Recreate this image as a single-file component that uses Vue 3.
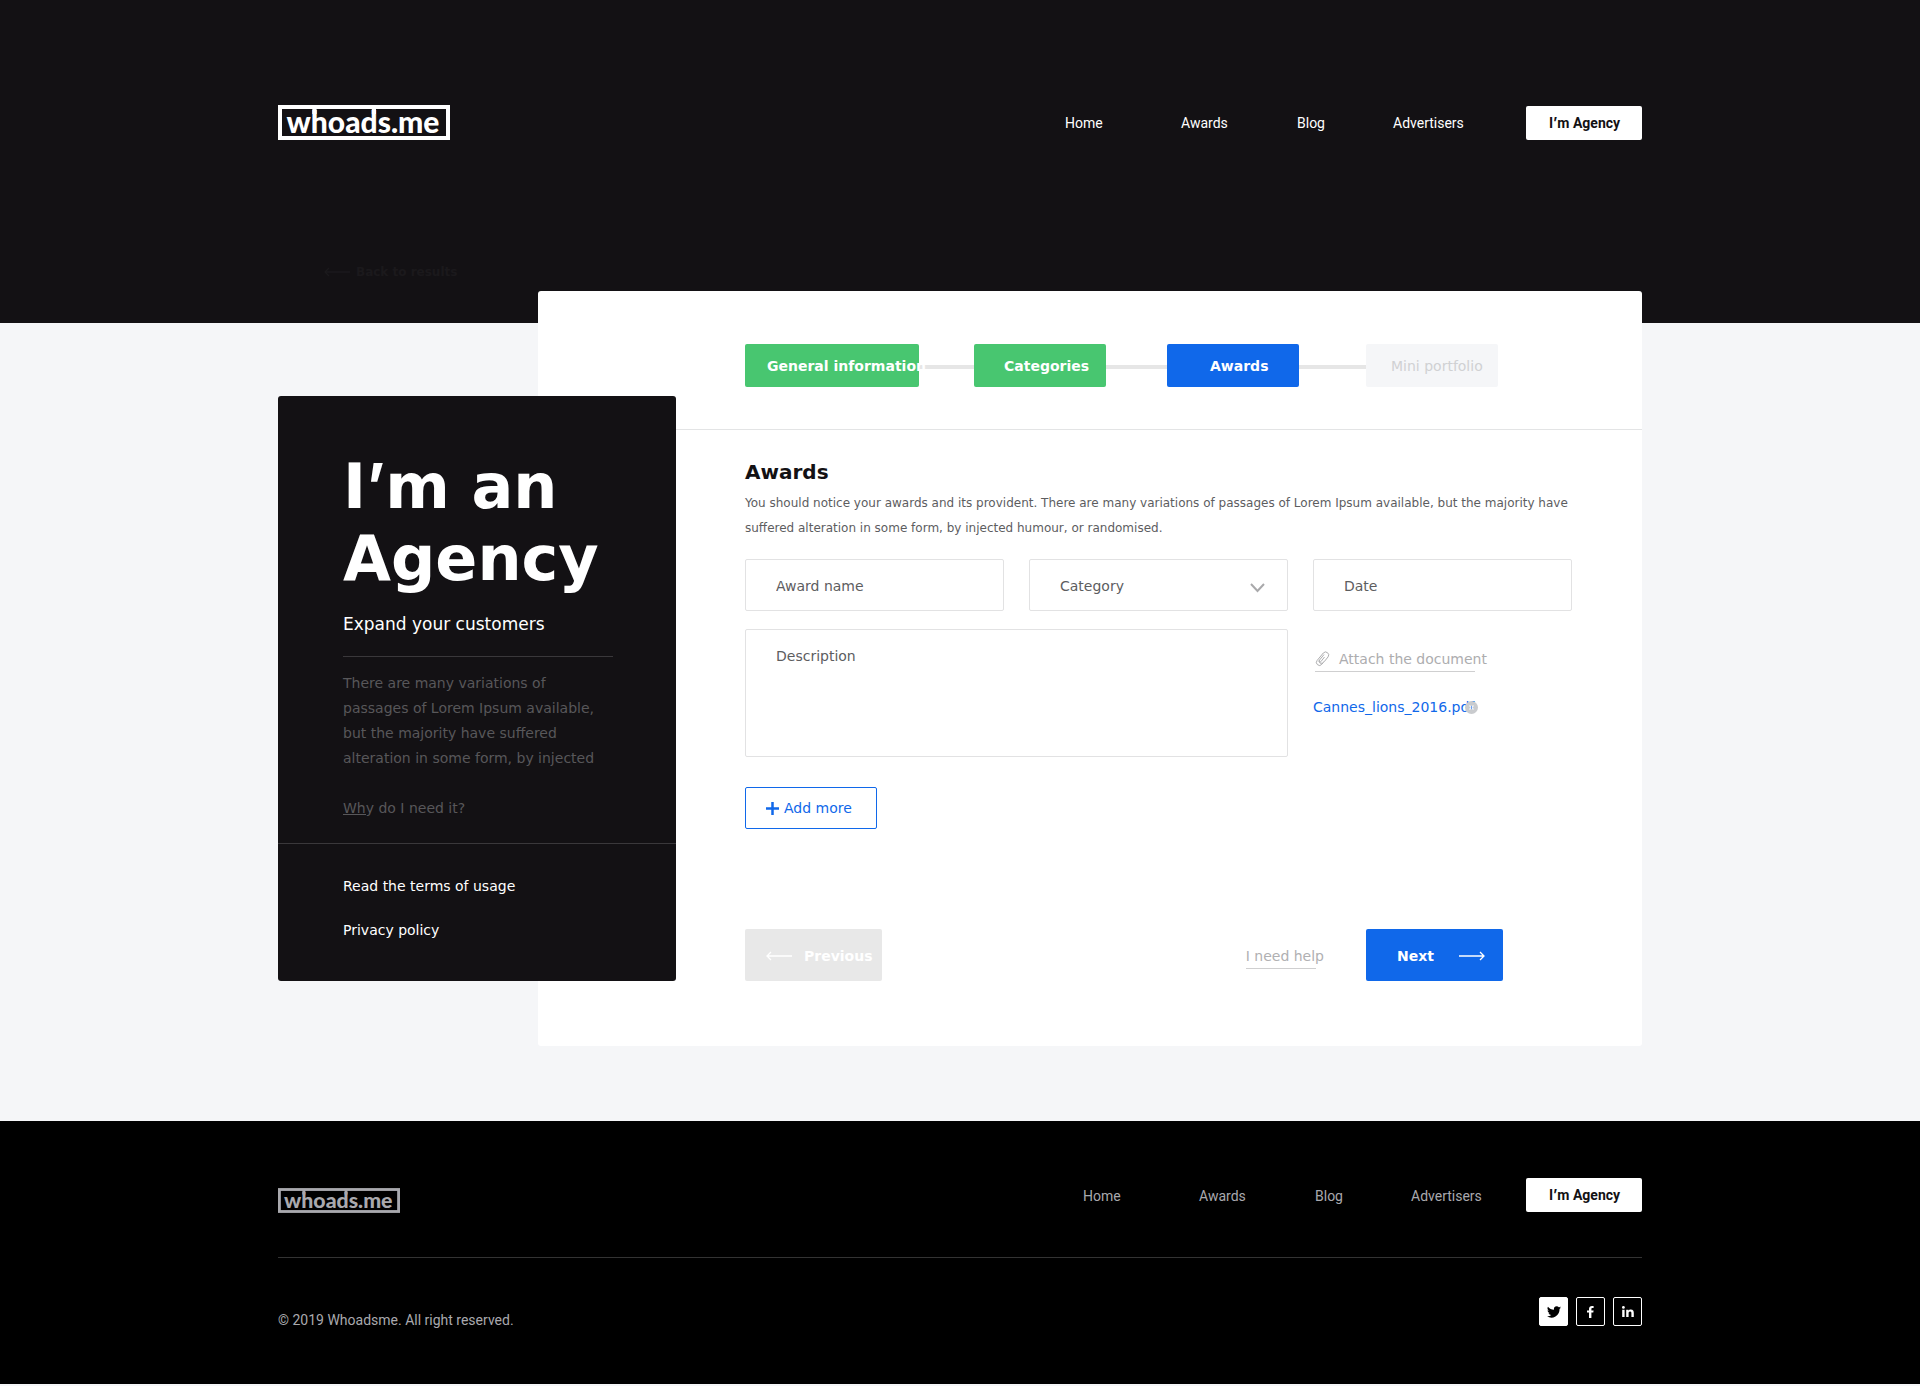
<script setup>
import { ref } from 'vue'

const links = ['Home', 'Awards', 'Blog', 'Advertisers']

const steps = [
  { label: 'General information', state: 'done wide', gap: 55 },
  { label: 'Categories', state: 'done', gap: 61 },
  { label: 'Awards', state: 'current', gap: 67 },
  { label: 'Mini portfolio', state: 'todo', gap: 0 },
]

const category = ref('')
const files = ref(['Cannes_lions_2016.pdf'])
const removeFile = (name) => {
  files.value = files.value.filter((f) => f !== name)
}
</script>

<template>
  <div class="page">
    <header class="top">
      <div class="container">
        <div class="bar">
          <a href="#" class="logo" aria-label="whoads.me">
            <svg viewBox="0 0 172 35" width="172" height="35">
              <rect x="2" y="2" width="168" height="31" fill="none" stroke="currentColor" stroke-width="4" />
              <path d="M34.300 3h4.300v6h-4.300zM93.800 3h4.200v6h-4.200z" fill="currentColor" />
              <text x="85" y="28" text-anchor="middle">whoads.me</text>
            </svg>
          </a>
          <nav class="nav">
            <a v-for="l in links" :key="l" href="#">{{ l }}</a>
            <button type="button" class="agency">I<span class="apos">’</span>m Agency</button>
          </nav>
        </div>
        <a href="#" class="back">
          <svg width="26" height="10" viewBox="0 0 26 10"><path d="M1 5h25M5 1L1 5l4 4" /></svg>
          Back to results
        </a>
      </div>
    </header>

    <main class="container stage">
      <section class="panel">
        <ol class="steps">
          <li v-for="s in steps" :key="s.label">
            <button type="button" class="step" :class="s.state">{{ s.label }}</button>
            <span v-if="s.gap" class="link-line" :style="{ width: s.gap + 'px' }"></span>
          </li>
        </ol>

        <form class="form" @submit.prevent>
          <h2>Awards</h2>
          <p class="intro">
            You should notice your awards and its provident. There are many variations of passages of
            Lorem Ipsum available, but the majority have suffered alteration in some form, by injected
            humour, or randomised.
          </p>

          <div class="fields">
            <div>
              <label class="sr" for="award-name">Award name</label>
              <input id="award-name" class="control" type="text" placeholder="Award name" />
            </div>
            <div class="select">
              <label class="sr" for="category">Category</label>
              <select id="category" v-model="category" class="control">
                <option value="">Category</option>
              </select>
              <svg width="16" height="10" viewBox="0 0 16 10"><path d="M1 1l6.500 7L14 1" /></svg>
            </div>
            <div>
              <label class="sr" for="date">Date</label>
              <input id="date" class="control" type="text" placeholder="Date" />
            </div>
            <div class="wide-field">
              <label class="sr" for="description">Description</label>
              <textarea id="description" class="control" placeholder="Description"></textarea>
            </div>
            <div class="files">
              <label class="attach" for="document">
                <svg width="15" height="16" viewBox="0 0 15 16">
                  <path d="M9.500 6L6 10.500a1 1 0 0 1-1.600-1.300L9 3.500M9.500 10L6.800 13.300a3 3 0 0 1-4.700-3.800L8.300 2a3.100 3.100 0 0 1 4.800 3.900L9.500 10.300M4.400 9.200a2 2 0 0 0 3 2.600" />
                </svg>
                Attach the document
              </label>
              <input id="document" class="sr" type="file" />
              <div v-for="f in files" :key="f" class="file">
                <a href="#">{{ f }}</a>
                <button type="button" :aria-label="'Remove ' + f" @click="removeFile(f)">
                  <svg width="13" height="13" viewBox="0 0 13 13">
                    <circle cx="6.500" cy="6.500" r="6.500" fill="#c9cbce" />
                    <path d="M4.500 4.500l4 4M8.500 4.500l-4 4" stroke="#f0f5fd" stroke-width="1.300" />
                    <path d="M6.500 5v3" stroke="#6aa0f0" stroke-width="1" />
                  </svg>
                </button>
              </div>
            </div>
          </div>

          <button type="button" class="add">
            <svg width="13" height="13" viewBox="0 0 13 13"><path d="M6.500 0v13M0 6.500h13" /></svg>
            Add more
          </button>

          <div class="actions">
            <button type="button" class="prev">
              <svg width="26" height="10" viewBox="0 0 26 10"><path d="M1 5h25M5 1L1 5l4 4" /></svg>
              Previous
            </button>
            <a href="#" class="help">I need help</a>
            <button type="submit" class="next">
              Next
              <svg width="26" height="10" viewBox="0 0 26 10"><path d="M0 5h25M21 1l4 4-4 4" /></svg>
            </button>
          </div>
        </form>
      </section>

      <aside class="side">
        <div class="about">
          <h1>I<span class="apos">’</span>m an Agency</h1>
          <p class="tagline">Expand your customers</p>
          <p class="copy">
            There are many variations of passages of Lorem Ipsum available, but the majority have
            suffered alteration in some form, by injected
          </p>
          <a href="#" class="why">Why do I need it?</a>
        </div>
        <div class="legal">
          <a href="#">Read the terms of usage</a>
          <a href="#">Privacy policy</a>
        </div>
      </aside>
    </main>

    <footer class="bottom">
      <div class="container">
        <div class="bar">
          <a href="#" class="logo small" aria-label="whoads.me">
            <svg viewBox="0 0 172 35" width="122" height="25">
              <rect x="2" y="2" width="168" height="31" fill="none" stroke="currentColor" stroke-width="4" />
              <path d="M34.300 3h4.300v6h-4.300zM93.800 3h4.200v6h-4.200z" fill="currentColor" />
              <text x="85" y="28" text-anchor="middle">whoads.me</text>
            </svg>
          </a>
          <nav class="nav">
            <a v-for="l in links" :key="l" href="#">{{ l }}</a>
            <button type="button" class="agency">I<span class="apos">’</span>m Agency</button>
          </nav>
        </div>
        <div class="base">
          <p>© 2019 Whoadsme. All right reserved.</p>
          <div class="social">
            <a href="#" class="filled" aria-label="Twitter">
              <svg width="14" height="12" viewBox="0 0 24 20" fill="currentColor">
                <path d="M24 2.400c-.9.400-1.800.7-2.800.8 1-.6 1.800-1.600 2.200-2.700-1 .6-2 1-3.100 1.200A4.900 4.900 0 0 0 11.900 6.200C7.800 6 4.200 4 1.700.9a4.900 4.900 0 0 0 1.500 6.600c-.8 0-1.600-.2-2.200-.6 0 2.300 1.600 4.400 3.900 4.900-.7.200-1.500.2-2.200.1.600 2 2.400 3.400 4.600 3.400A9.900 9.900 0 0 1 0 17.300 13.900 13.900 0 0 0 21.500 5c1-.7 1.800-1.600 2.500-2.600z" />
              </svg>
            </a>
            <a href="#" aria-label="Facebook">
              <svg width="7" height="12" viewBox="0 0 7 12" fill="currentColor">
                <path d="M2 12V6.500H0v-2h2V3c0-2 1.200-3 3-3h1.600v2H5.500c-.8 0-1.100.4-1.100 1v1.500h2.200l-.3 2H4.400V12z" />
              </svg>
            </a>
            <a href="#" aria-label="LinkedIn">
              <svg width="12" height="11" viewBox="0 0 12 11" fill="currentColor">
                <circle cx="1.400" cy="1.400" r="1.400" />
                <path d="M.2 3.800h2.400V11H.2zM4.200 3.800h2.300v1c.4-.7 1.200-1.200 2.300-1.200 2.400 0 3 1.500 3 3.500V11H9.400V7.500c0-.9-.1-1.900-1.300-1.900s-1.500.9-1.500 1.900V11H4.200z" />
              </svg>
            </a>
          </div>
        </div>
      </div>
    </footer>
  </div>
</template>

<style>
body {
  margin: 0;
  background: #f5f6f8;
}
</style>

<style scoped>
.page {
  padding-bottom: 2px;
  font-family: "DejaVu Sans", sans-serif;
  font-size: 14px;
  color: #131114;
}
.page * {
  box-sizing: border-box;
}
h1,
h2,
p,
ol {
  margin: 0;
  padding: 0;
}
a {
  color: inherit;
  text-decoration: none;
}
button {
  padding: 0;
  border: 0;
  border-radius: 2px;
  font: inherit;
  cursor: pointer;
}
svg {
  display: block;
  flex: none;
  overflow: visible;
}
.sr {
  position: absolute;
  width: 1px;
  height: 1px;
  overflow: hidden;
  opacity: 0;
}
.apos {
  font-family: Inter, sans-serif;
  line-height: 0;
}
.container {
  max-width: 1364px;
  margin: 0 auto;
}

/* header and footer bars */
.top {
  padding: 105px 0 43px;
  background: #131114;
  color: #fff;
}
.bar {
  display: flex;
  justify-content: space-between;
  align-items: flex-end;
}
.logo text {
  font: 900 30px Lato, sans-serif;
  fill: currentColor;
}
.nav {
  display: grid;
  grid-template-columns: 116px 116px 96px 133px 116px;
  align-items: center;
  height: 34px;
  font-family: Roboto, sans-serif;
}
.agency {
  height: 34px;
  padding-left: 1px;
  background: #fff;
  color: #131114;
  font-weight: 700;
}
.back {
  display: flex;
  align-items: center;
  gap: 6px;
  margin: 124px 0 0 46px;
  font-size: 12px;
  font-weight: 700;
  line-height: 16px;
  color: #1b191c;
}
.back path,
.prev path,
.next path {
  fill: none;
  stroke: currentColor;
  stroke-width: 1.3;
}

/* overlapping cards */
.stage {
  display: grid;
  grid-template-columns: 260px 138px 1fr;
  align-items: start;
  margin-top: -32px;
  margin-bottom: 75px;
}
.panel {
  grid-area: 1 / 2 / 2 / 4;
  background: #fff;
  border-radius: 3px;
}
.side {
  position: relative;
  grid-area: 1 / 1 / 2 / 3;
  margin-top: 105px;
  background: #131114;
  border-radius: 3px;
  color: #fff;
}

/* progress */
.steps {
  display: flex;
  padding: 53px 0 42px 207px;
  border-bottom: 1px solid #e3e4e5;
  list-style: none;
}
.steps li {
  display: flex;
  align-items: center;
}
.step {
  position: relative;
  z-index: 1;
  width: 132px;
  height: 43px;
  padding-left: 30px;
  color: #fff;
  font-weight: 700;
  text-align: left;
  white-space: nowrap;
}
.done {
  background: #48c670;
}
.wide {
  width: 174px;
  padding-left: 22px;
}
.current {
  padding-left: 43px;
  background: #1068ea;
}
.todo {
  padding-left: 25px;
  background: #f5f6f8;
  color: #d0d1d3;
  font-weight: 400;
}
.link-line {
  height: 4px;
  margin-top: 3px;
  background: #e6e6e6;
}

/* form */
.form {
  padding: 30px 70px 65px 207px;
}
h2 {
  font-size: 20px;
  line-height: 24px;
}
.intro {
  margin: 7px 0 18px;
  font-size: 12px;
  line-height: 25px;
  color: #5d5d5f;
}
.fields {
  display: grid;
  grid-template-columns: repeat(3, 1fr);
  gap: 18px 25px;
}
.control {
  display: block;
  width: 100%;
  height: 52px;
  padding: 2px 30px 0;
  border: 1px solid #e2e2e3;
  border-radius: 2px;
  background: #fff;
  appearance: none;
  font: inherit;
  color: #5d5d5f;
}
.control::placeholder {
  color: #5d5d5f;
  opacity: 1;
}
textarea.control {
  height: 128px;
  padding: 14px 30px;
  line-height: 24px;
  resize: none;
}
.wide-field {
  grid-column: span 2;
}
.select {
  position: relative;
}
.select svg {
  position: absolute;
  top: 24px;
  right: 22px;
  pointer-events: none;
}
.select path {
  fill: none;
  stroke: #a9a9ab;
  stroke-width: 2;
}
.files {
  padding-top: 18px;
  line-height: 24px;
}
.attach {
  position: relative;
  display: flex;
  align-items: center;
  gap: 9px;
  padding-left: 2px;
  color: #adadaf;
  white-space: nowrap;
  cursor: pointer;
}
.attach path {
  fill: none;
  stroke: currentColor;
  stroke-width: 1;
}
.attach::after,
.help::after,
.why::after {
  content: "";
  position: absolute;
  left: 0;
  bottom: 0;
  height: 1px;
  background: #cfcfd0;
}
.attach::after {
  bottom: -1px;
  left: 2px;
  width: 160px;
}
.file {
  position: relative;
  margin-top: 24px;
  color: #1068ea;
}
.file button {
  position: absolute;
  top: 6px;
  left: 152px;
  background: none;
}
.add {
  display: flex;
  align-items: center;
  gap: 5px;
  width: 132px;
  height: 42px;
  margin-top: 30px;
  padding-left: 20px;
  border: 1px solid #1068ea;
  background: #fff;
  color: #1068ea;
}
.add path {
  stroke: currentColor;
  stroke-width: 2.500;
}
.actions {
  display: flex;
  align-items: center;
  margin: 100px 69px 0 0;
}
.prev,
.next {
  display: flex;
  align-items: center;
  width: 137px;
  height: 52px;
  color: #fff;
  font-weight: 700;
}
.prev {
  gap: 12px;
  padding: 2px 0 0 21px;
  background: #e8e8e8;
}
.next {
  justify-content: space-between;
  padding: 2px 18px 0 31px;
  background: #1068ea;
}
.help {
  position: relative;
  margin: 2px 42px 0 auto;
  line-height: 26px;
  color: #b0b0b2;
}
.help::after {
  width: 70px;
}

/* side card */
.about {
  padding: 55px 63px 22px 65px;
  border-bottom: 1px solid #3a383b;
}
h1 {
  font-size: 62px;
  line-height: 72px;
}
.tagline {
  margin-top: 17px;
  padding-bottom: 20px;
  border-bottom: 1px solid #3a383b;
  font-size: 17px;
  line-height: 24px;
}
.copy {
  margin: 14px 0 25px;
  line-height: 25px;
  color: #58575a;
}
.why {
  position: relative;
  display: block;
  line-height: 25px;
  color: #58575a;
}
.why::after {
  bottom: 6px;
  width: 23px;
  background: #58575a;
}
.legal {
  display: grid;
  gap: 20px;
  padding: 30px 65px 39px;
  line-height: 24px;
}

/* footer */
.bottom {
  padding: 57px 0 56px;
  background: #000;
  color: #a9a9ae;
  font-family: Roboto, sans-serif;
}
.bottom .nav {
  grid-template-columns: 116px 116px 96px 115px 116px;
}
.bottom .nav a {
  padding-top: 2px;
}
.bottom .bar {
  align-items: flex-start;
  padding-bottom: 44px;
  border-bottom: 1px solid #333;
}
.small {
  padding-top: 10px;
}
.base {
  display: flex;
  justify-content: space-between;
  align-items: flex-start;
  padding-top: 39px;
}
.base p {
  margin-top: 15px;
  line-height: 16px;
}
.social {
  display: flex;
  gap: 8px;
}
.social a {
  display: flex;
  align-items: center;
  justify-content: center;
  width: 29px;
  height: 29px;
  border: 1px solid #fff;
  border-radius: 2px;
  color: #fff;
}
.social .filled {
  background: #fff;
  color: #000;
}
</style>
